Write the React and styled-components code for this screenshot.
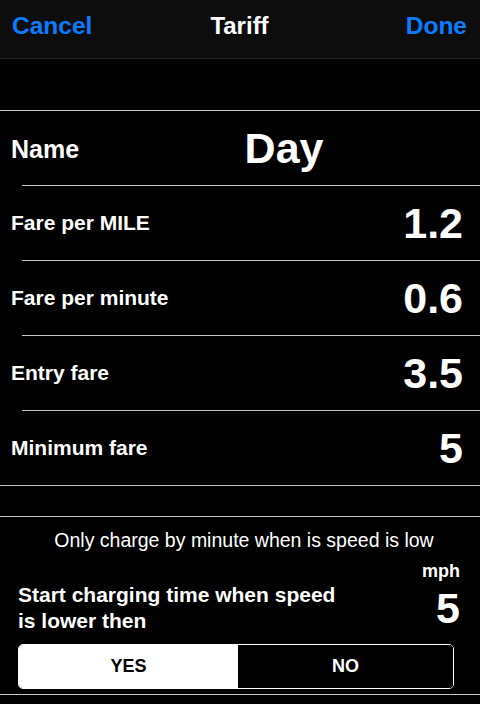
import styled, { createGlobalStyle } from 'styled-components';

const GlobalStyle = createGlobalStyle`
  html, body {
    margin: 0;
    padding: 0;
    background: #000;
  }
  body {
    font-family: "Liberation Sans", Arial, Helvetica, sans-serif;
    color: #fff;
    -webkit-font-smoothing: antialiased;
  }
`;

const Screen = styled.div`
  width: 480px;
  height: 704px;
  background: #000;
  overflow: hidden;
`;

const NavBar = styled.div`
  height: 59px;
  display: grid;
  grid-template-columns: 1fr auto 1fr;
  align-items: center;
  padding: 0 13px 6px 12px;
  background: #0d0d0d;
  border-bottom: 1px solid #222;
  box-sizing: border-box;
`;

const NavButton = styled.span`
  font-size: 24.5px;
  font-weight: 700;
  color: #0a7cff;
  justify-self: ${(p) => (p.$right ? 'end' : 'start')};
`;

const NavTitle = styled.span`
  font-size: 24px;
  font-weight: 700;
  color: #fff;
`;

const Spacer = styled.div`
  height: ${(p) => p.$h}px;
`;

const Group = styled.div`
  border-top: 1px solid #c8c8c8;
  border-bottom: 1px solid #c8c8c8;
`;

const Row = styled.div`
  position: relative;
  height: 74px;
  display: flex;
  align-items: center;
  padding: 0 17px 0 11px;
  box-sizing: border-box;

  & + & {
    margin-top: 1px;
  }

  & + &::before {
    content: '';
    position: absolute;
    left: 22px;
    right: 0;
    top: -1px;
    height: 1px;
    background: #c8c8c8;
  }
`;

const Label = styled.span`
  font-size: ${(p) => (p.$big ? 25 : 21)}px;
  font-weight: 700;
  flex: ${(p) => (p.$big ? '0 0 auto' : '1')};
  margin-top: ${(p) => (p.$big ? '3px' : '0')};
`;

const Value = styled.span`
  font-size: 43px;
  font-weight: 700;
  line-height: 1;
  text-align: ${(p) => (p.$center ? 'center' : 'right')};
  flex: ${(p) => (p.$center ? '1' : '0 0 auto')};
  margin-left: ${(p) => (p.$center ? '9px' : '0')};
  margin-right: ${(p) => (p.$center ? '-17px' : '0')};
`;

const Section = styled.div`
  border-top: 1px solid #c8c8c8;
  border-bottom: 1px solid #c8c8c8;
  padding: 12px 0 5px;
`;

const Note = styled.div`
  font-size: 19.5px;
  line-height: 22px;
  text-align: center;
  padding-left: 8px;
`;

const SpeedRow = styled.div`
  margin-top: 10px;
  display: flex;
  justify-content: space-between;
  padding: 0 20px 0 18px;
`;

const SpeedText = styled.div`
  margin-top: 21px;
  font-size: 21px;
  font-weight: 700;
  line-height: 26px;
  width: 330px;
`;

const SpeedValue = styled.div`
  display: flex;
  flex-direction: column;
  align-items: flex-end;
`;

const Unit = styled.span`
  font-size: 18px;
  font-weight: 700;
  line-height: 20px;
`;

const BigNumber = styled.span`
  margin-top: 6px;
  font-size: 43px;
  font-weight: 700;
  line-height: 43px;
`;

const Segmented = styled.div`
  margin: 10px 26px 0 18px;
  height: 45px;
  display: grid;
  grid-template-columns: 219px 1fr;
  border: 1px solid #fff;
  border-radius: 5px;
  overflow: hidden;
  box-sizing: border-box;
`;

const Segment = styled.div`
  display: flex;
  align-items: center;
  justify-content: center;
  font-size: 18px;
  font-weight: 700;
  background: ${(p) => (p.$active ? '#fff' : '#000')};
  color: ${(p) => (p.$active ? '#000' : '#fff')};
`;

const fares = [
  { label: 'Fare per MILE', value: '1.2' },
  { label: 'Fare per minute', value: '0.6' },
  { label: 'Entry fare', value: '3.5' },
  { label: 'Minimum fare', value: '5' },
];

export default function App() {
  return (
    <>
      <GlobalStyle />
      <Screen>
        <NavBar>
          <NavButton>Cancel</NavButton>
          <NavTitle>Tariff</NavTitle>
          <NavButton $right>Done</NavButton>
        </NavBar>
        <Spacer $h={51} />
        <Group>
          <Row>
            <Label $big>Name</Label>
            <Value $center>Day</Value>
          </Row>
          {fares.map((f) => (
            <Row key={f.label}>
              <Label>{f.label}</Label>
              <Value>{f.value}</Value>
            </Row>
          ))}
        </Group>
        <Spacer $h={30} />
        <Section>
          <Note>Only charge by minute when is speed is low</Note>
          <SpeedRow>
            <SpeedText>Start charging time when speed is lower then</SpeedText>
            <SpeedValue>
              <Unit>mph</Unit>
              <BigNumber>5</BigNumber>
            </SpeedValue>
          </SpeedRow>
          <Segmented>
            <Segment $active>YES</Segment>
            <Segment>NO</Segment>
          </Segmented>
        </Section>
      </Screen>
    </>
  );
}
